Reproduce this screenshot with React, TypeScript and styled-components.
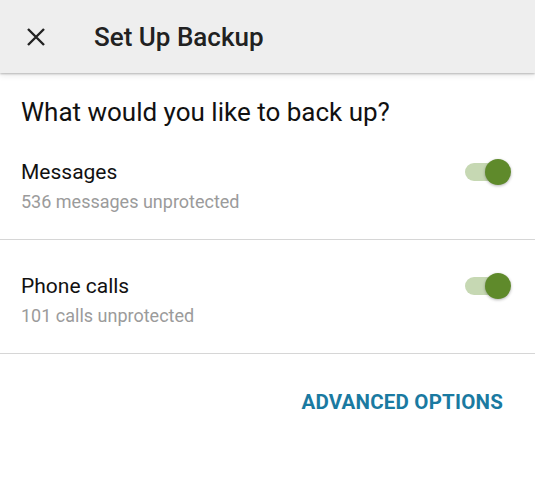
import React from "react";
import styled, { createGlobalStyle } from "styled-components";

const GlobalStyle = createGlobalStyle`
  html, body { margin: 0; padding: 0; background: #ffffff; }
  body { font-family: Roboto, "Noto Sans", sans-serif; }
`;

const Screen = styled.div`
  width: 535px;
  height: 482px;
  background: #ffffff;
  overflow: hidden;
`;

const Toolbar = styled.div`
  height: 73px;
  background: #eeeeee;
  display: flex;
  align-items: center;
  box-shadow: 0 1px 2px rgba(0, 0, 0, 0.25), 0 3px 6px rgba(0, 0, 0, 0.08);
  position: relative;
  z-index: 1;
`;

const CloseButton = styled.div`
  width: 94px;
  padding-left: 26px;
  box-sizing: border-box;
  display: flex;
  align-items: center;
  height: 100%;
`;

const Title = styled.h1`
  margin: 0;
  font-size: 26px;
  font-weight: 500;
  color: #212121;
`;

const Heading = styled.h2`
  margin: 0;
  height: 53px;
  box-sizing: border-box;
  padding: 24px 21px 0;
  font-size: 26px;
  line-height: 30px;
  font-weight: 400;
  color: #111111;
`;

const Row = styled.div`
  display: flex;
  align-items: flex-start;
  justify-content: space-between;
  padding: 34px 24px 0 21px;
  height: 114px;
  box-sizing: border-box;
  border-bottom: 1px solid #d6d6d6;
`;

const RowText = styled.div`
  display: flex;
  flex-direction: column;
  gap: 7px;
`;

const RowTitle = styled.span`
  font-size: 21px;
  line-height: 24px;
  color: #111111;
`;

const RowSub = styled.span`
  font-size: 18px;
  line-height: 22px;
  color: #9b9b9b;
`;

const Switch = styled.div`
  position: relative;
  width: 38px;
  height: 18px;
  border-radius: 9px;
  background: #c6d8b3;
  margin-top: 3px;
  margin-right: 8px;
`;

const Thumb = styled.div`
  position: absolute;
  right: -8px;
  top: -4px;
  width: 26px;
  height: 26px;
  border-radius: 50%;
  background: #5f8a2b;
  box-shadow: 0 1px 3px rgba(0, 0, 0, 0.3);
`;

const Actions = styled.div`
  display: flex;
  justify-content: flex-end;
  padding: 36px 32px 0 0;
`;

const TextButton = styled.button`
  border: none;
  background: none;
  padding: 0;
  font-family: Roboto, sans-serif;
  font-size: 20.5px;
  line-height: 24px;
  font-weight: 700;
  color: #1a7aa1;
  letter-spacing: 0.2px;
`;

const items = [
  { title: "Messages", sub: "536 messages unprotected" },
  { title: "Phone calls", sub: "101 calls unprotected" },
];

export default function App() {
  return (
    <Screen>
      <GlobalStyle />
      <Toolbar>
        <CloseButton>
          <svg width="20" height="20" viewBox="0 0 20 20">
            <path d="M2 2 L18 18 M18 2 L2 18" stroke="#222" strokeWidth="2.4" />
          </svg>
        </CloseButton>
        <Title>Set Up Backup</Title>
      </Toolbar>
      <Heading>What would you like to back up?</Heading>
      {items.map((it) => (
        <Row key={it.title}>
          <RowText>
            <RowTitle>{it.title}</RowTitle>
            <RowSub>{it.sub}</RowSub>
          </RowText>
          <Switch>
            <Thumb />
          </Switch>
        </Row>
      ))}
      <Actions>
        <TextButton>ADVANCED OPTIONS</TextButton>
      </Actions>
    </Screen>
  );
}
